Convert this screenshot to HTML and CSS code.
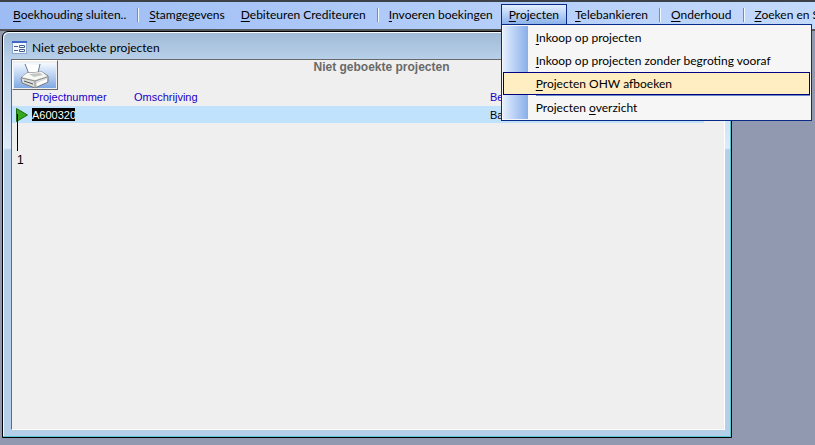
FILE: index.html
```html
<!DOCTYPE html>
<html lang="nl">
  <head>
    <meta charset="UTF-8" />
    <meta name="viewport" content="width=device-width, initial-scale=1.0" />
    <title>Niet geboekte projecten</title>
    <link rel="stylesheet" href="styles.css">
  </head>
  <body>
    <nav class="menubar">
      <button type="button" class="menu-item"><u>B</u>oekhouding sluiten..</button>
      <span class="separator"></span>
      <button type="button" class="menu-item"><u>S</u>tamgegevens</button>
      <button type="button" class="menu-item"><u>D</u>ebiteuren Crediteuren</button>
      <span class="separator"></span>
      <button type="button" class="menu-item"><u>I</u>nvoeren boekingen</button>
      <div class="menu-group">
        <button type="button" class="menu-item open" aria-expanded="true"><u>P</u>rojecten</button>
        <div class="dropdown">
          <button type="button" class="option"><u>I</u>nkoop op projecten</button>
          <button type="button" class="option"><u>I</u>nkoop op projecten zonder begroting vooraf</button>
          <button type="button" class="option active"><u>P</u>rojecten OHW afboeken</button>
          <hr class="divider">
          <button type="button" class="option">Projecten <u>o</u>verzicht</button>
        </div>
      </div>
      <button type="button" class="menu-item"><u>T</u>elebankieren</button>
      <span class="separator"></span>
      <button type="button" class="menu-item"><u>O</u>nderhoud</button>
      <span class="separator"></span>
      <button type="button" class="menu-item"><u>Z</u>oeken en S</button>
    </nav>

    <main class="desktop">
      <section class="window">
        <header class="titlebar">
          <svg class="form-icon" width="15" height="13" viewBox="0 0 15 13">
            <rect x="0.5" y="0.5" width="14" height="12" fill="#f4f8ff" stroke="#8fa6cc" />
            <rect x="0" y="0" width="15" height="2" fill="#3f68c8" />
            <path d="M2 5.500h4M2 9.500h4" stroke="#44608f" />
            <path d="M7.500 4.500h5v2h-5zM7.500 8.500h5v2h-5z" fill="#fff" stroke="#44608f" />
          </svg>
          <h1 class="window-title">Niet geboekte projecten</h1>
        </header>

        <div class="form">
          <div class="form-header">
            <button type="button" class="print" aria-label="Afdrukken">
              <svg width="42" height="25" viewBox="0 0 42 25">
                <defs>
                  <linearGradient id="sky" x1="0" y1="0" x2="0" y2="1">
                    <stop offset="0" stop-color="#f4f9ff" />
                    <stop offset="1" stop-color="#7fa9e4" />
                  </linearGradient>
                </defs>
                <rect width="42" height="25" fill="url(#sky)" />
                <path d="M11 1l4 11h9l2-10" fill="#fff" />
                <path d="M11 1l4 10M26 1l-2 9" fill="none" stroke="#66788f" />
                <path d="M7 15l6-5 15-1 6 4v6l-13 6-13-5z" fill="#dcddda" stroke="#77797a" />
                <path d="M13 10l15-1 5 4-12 4-13-3z" fill="#f8f8f4" />
                <path d="M15 11l11-1 3 2-9 2z" fill="#c3c7c8" />
                <path d="M8 15l13 3 12-4M21 18v6" fill="none" stroke="#8b8d8c" />
                <path d="M10 18l9 3" stroke="#55585c" />
                <path d="M23 20l10-4v3l-10 4z" fill="#fff" />
              </svg>
            </button>
            <h2 class="form-title">Niet geboekte projecten</h2>
          </div>

          <table class="projects">
            <thead>
              <tr>
                <th class="marker-col"></th>
                <th class="number-col">Projectnummer</th>
                <th class="name-col">Omschrijving</th>
                <th>Be</th>
              </tr>
            </thead>
            <tbody>
              <tr>
                <td class="marker">
                  <svg width="14" height="16" viewBox="0 0 14 16">
                    <path d="M1.500 1.500L12.500 8L1.500 14.500z" fill="#35a820" stroke="#1c6a10" />
                  </svg>
                  <span class="callout">1</span>
                </td>
                <td><input class="number" type="text" value="A600320" aria-label="Projectnummer"></td>
                <td></td>
                <td>Ba</td>
              </tr>
            </tbody>
          </table>
        </div>
      </section>
    </main>
  </body>
</html>
```

FILE: styles.css
```css
* {
  box-sizing: border-box;
}

body {
  margin: 0;
  height: 100vh;
  display: flex;
  flex-direction: column;
  overflow: hidden;
  font-family: Lato, sans-serif;
  font-size: 12px;
  color: #000;
  background: #9099af;
}

button {
  font: inherit;
  color: inherit;
  border: none;
  background: none;
  cursor: pointer;
}

u {
  text-underline-offset: 2px;
}

.menubar {
  display: flex;
  height: 31px;
  padding: 2px 0 2px 5px;
  border-top: 2px solid #3c4148;
  border-bottom: 2px solid #55565a;
  background: linear-gradient(to right, #9dbcf4, #c4dafc);
  white-space: nowrap;
}

.menu-item {
  flex: none;
  height: 21px;
  padding: 0 8px;
  line-height: 20px;
}

.separator {
  flex: none;
  width: 2px;
  height: 14px;
  margin: 4px 2px 4px 3px;
  border-left: 1px solid #6a8ccb;
  border-right: 1px solid #f1f9ff;
}

.menu-group {
  position: relative;
}

.menu-item.open {
  padding: 0 7px;
  border: 1px solid #0a2a88;
  border-bottom: none;
  background: linear-gradient(#e3efff, #88aee9);
}

.dropdown {
  position: absolute;
  z-index: 1;
  top: 20px;
  left: 0;
  width: 311px;
  padding: 1px;
  border: 1px solid #0a2a88;
  background: linear-gradient(to right, #e3efff, #88aee9) 1px 1px / 25px calc(100% - 2px) no-repeat #f6f6f6;
}

.option {
  display: block;
  width: 100%;
  height: 23px;
  padding: 0 0 0 32px;
  border: 1px solid transparent;
  line-height: 20px;
  text-align: left;
}

.option.active {
  border-color: #000080;
  background: #ffeec2;
}

.divider {
  height: 1px;
  margin: 0 0 0 33px;
  border: none;
  background: #6a8ccb;
}

.desktop {
  flex: 1;
  display: flex;
  padding: 0 83px 7px 2px;
}

.window {
  flex: 1;
  display: flex;
  flex-direction: column;
  padding: 0 6px 7px 8px;
  border: 1px solid #000;
  border-radius: 6px 0 0 0;
  box-shadow: inset -1px -1px #55c8d4, inset 1px 1px #f5faff;
  background: linear-gradient(#9fb9d6, #b9d1ea 28px, #dcebfa 116px, #b4cfe8 118px);
}

.titlebar {
  display: flex;
  align-items: center;
  gap: 5px;
  height: 27px;
  padding: 4px 0 0 1px;
}

.window-title {
  margin: 0;
  font-size: 12px;
  font-weight: normal;
}

.form {
  flex: 1;
  border: 1px solid;
  border-color: #696969 #fff #fff #696969;
  background: #efefef;
  font-family: "Liberation Sans", sans-serif;
  font-size: 11px;
}

.form-header {
  display: grid;
  grid-template-columns: 47px 1fr 20px;
  height: 30px;
}

.print {
  width: 46px;
  height: 30px;
  padding: 1px;
  border: 1px solid;
  border-color: #fff #696969 #696969 #fff;
  background: #efefef;
}

.print svg {
  display: block;
}

.form-title {
  margin: 1px 0 0;
  color: #696969;
  font-size: 12px;
  line-height: 12px;
  text-align: center;
}

.projects {
  width: calc(100% - 20px);
  table-layout: fixed;
  border-collapse: collapse;
}

.projects th {
  height: 16px;
  padding: 0 0 2px;
  color: #1a00c8;
  font-weight: normal;
  text-align: left;
}

.projects td {
  height: 17px;
  padding: 0;
  background: #c0e2fd;
}

.marker-col {
  width: 20px;
}

.number-col {
  width: 102px;
}

.name-col {
  width: 356px;
}

.projects .marker {
  position: relative;
  padding-left: 3px;
}

.marker svg {
  display: block;
}

.number {
  display: block;
  width: 43px;
  height: 13px;
  padding: 0;
  border: none;
  background: #000;
  color: #fff;
  font: inherit;
}

/* pointer line running down from the record marker */
.callout {
  position: absolute;
  top: 8px;
  left: 5px;
  padding-top: 39px;
  font-size: 12px;
}

.callout::before {
  content: "";
  position: absolute;
  top: 0;
  left: 0;
  height: 37px;
  border-left: 1px solid #000;
}
```
